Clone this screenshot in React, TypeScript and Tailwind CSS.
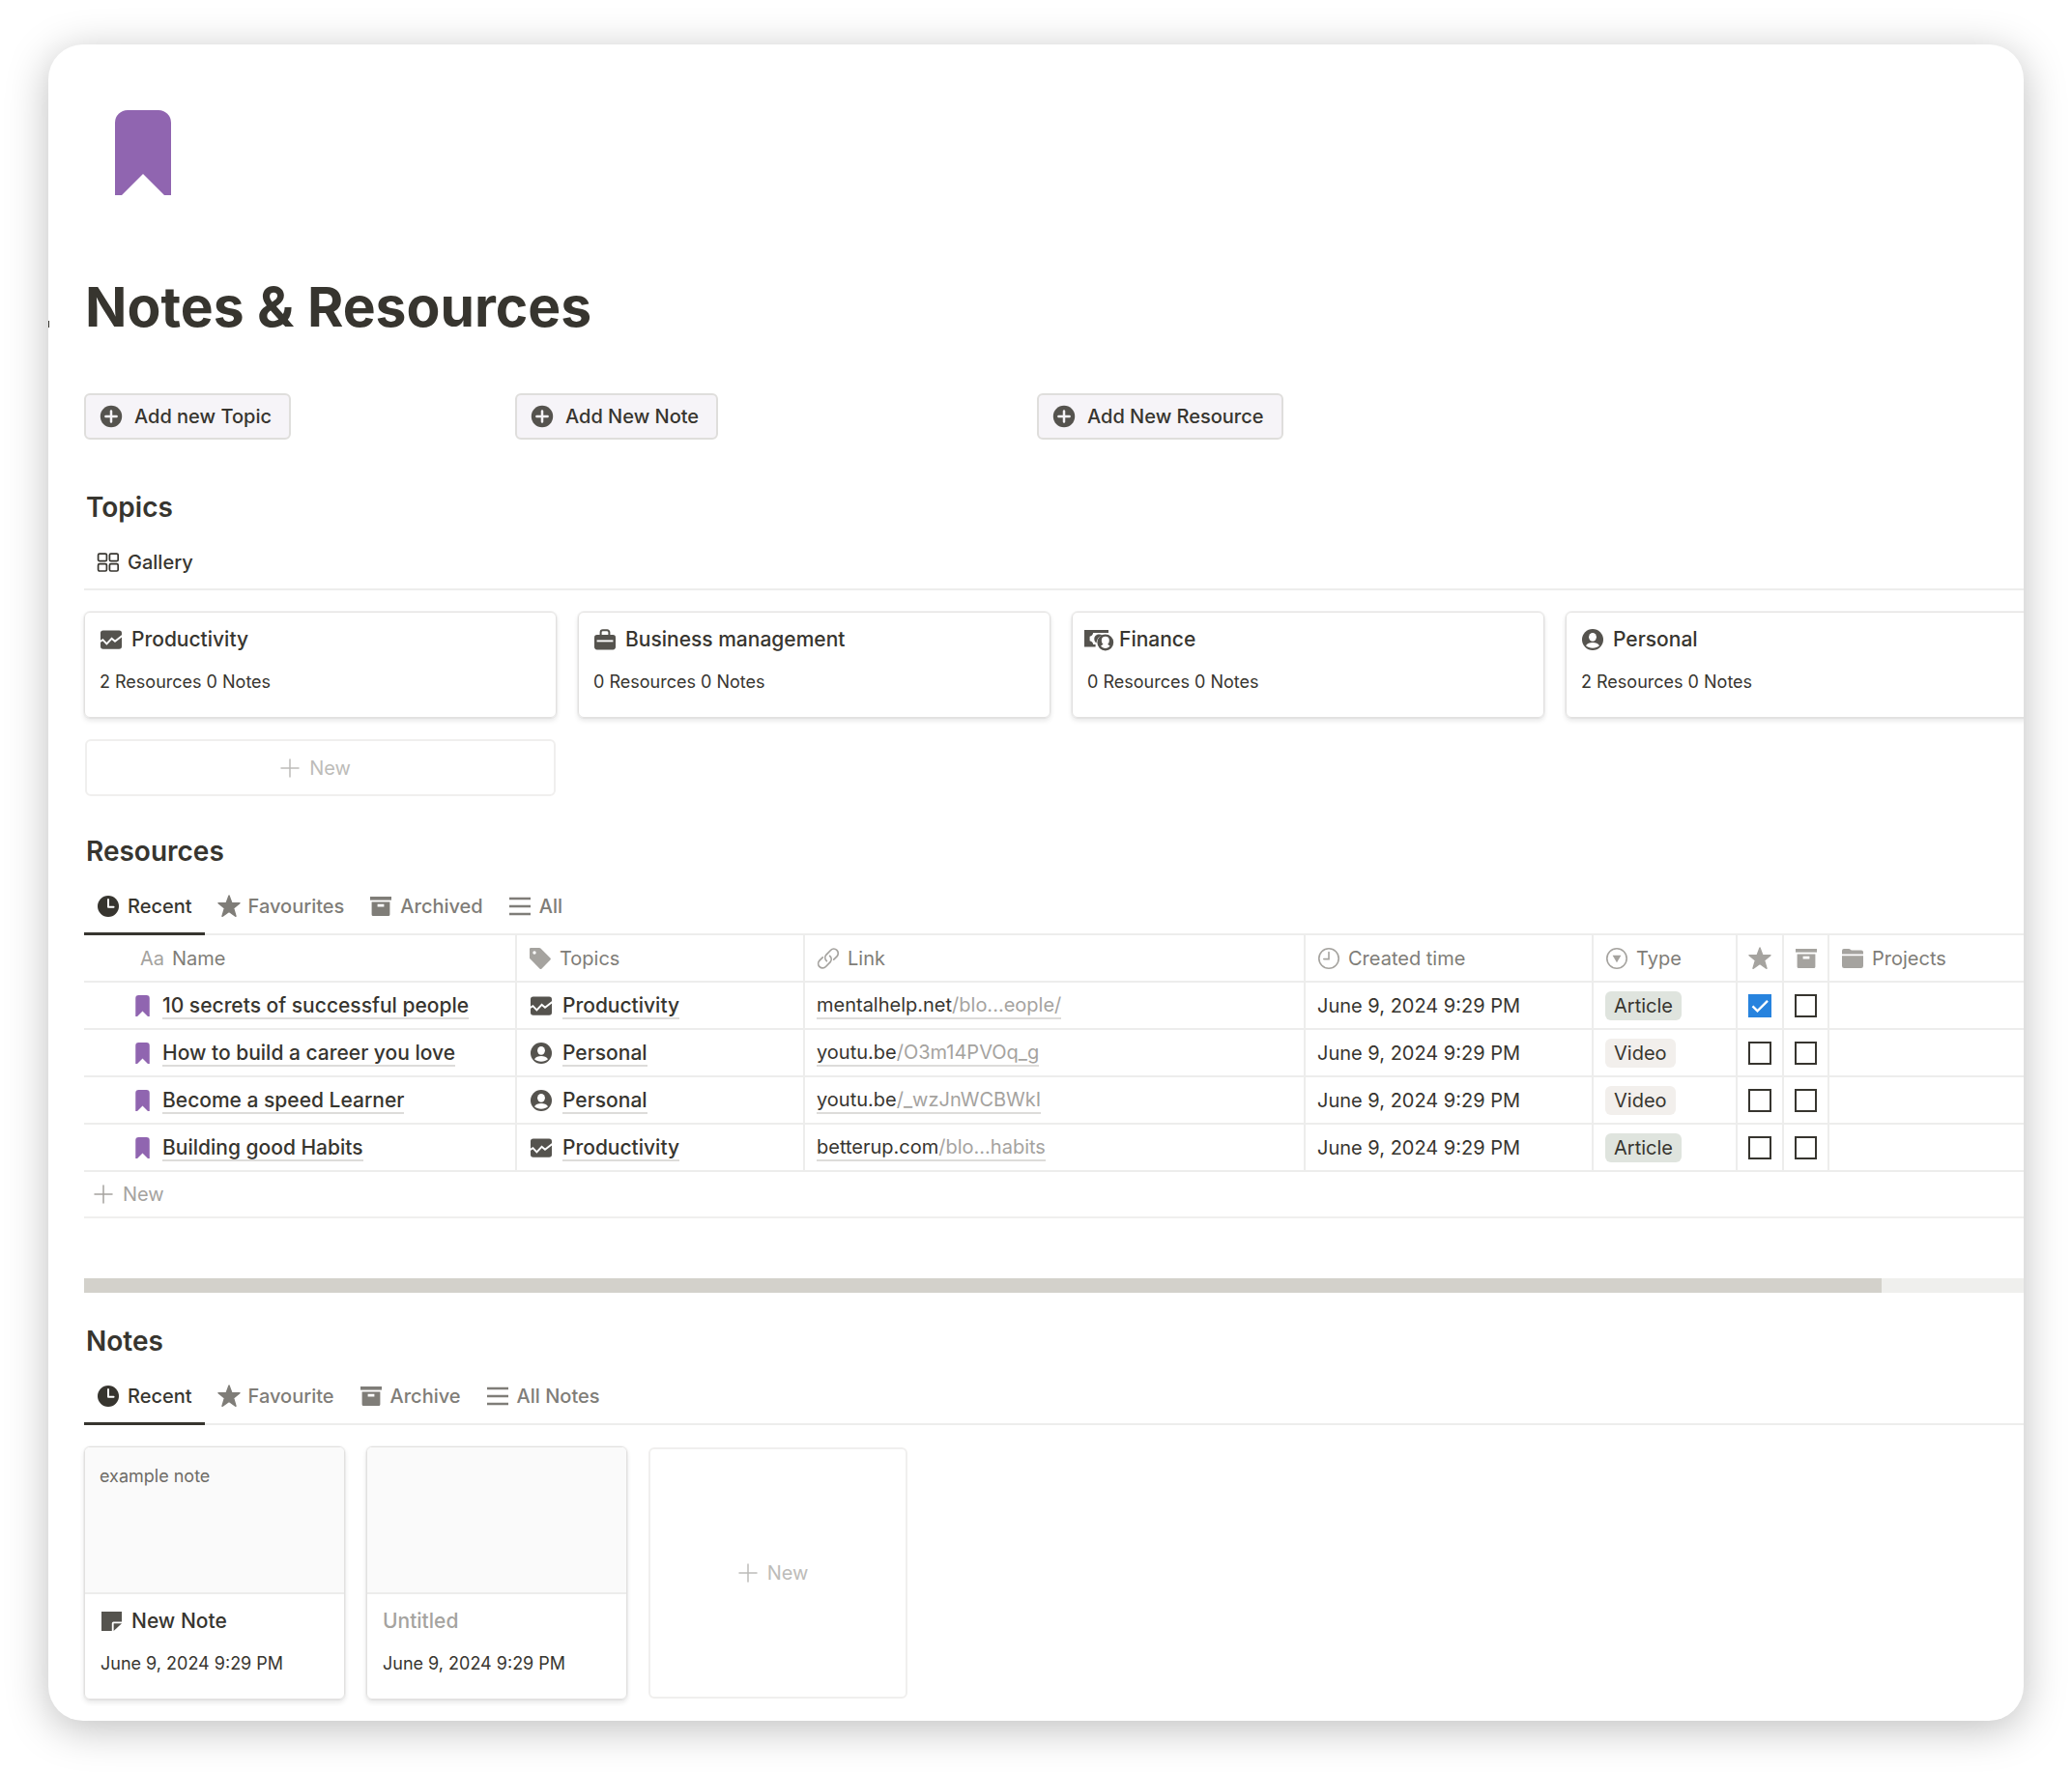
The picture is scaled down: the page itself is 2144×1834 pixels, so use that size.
import type { ReactNode } from 'react';

// ─── Icons ────────────────────────────────────────────────────────────────────
// All drawn on a 24 grid, coloured through currentColor.

type IconProps = { className?: string };

function Svg({ className = 'size-6', children }: IconProps & { children: ReactNode }) {
  return (
    <svg viewBox="0 0 24 24" fill="currentColor" className={`shrink-0 ${className}`} aria-hidden="true">
      {children}
    </svg>
  );
}

function PlusCircle({ className }: IconProps) {
  return (
    <Svg className={className}>
      <circle cx="12" cy="12" r="11.2" />
      <path d="M12 6.4v11.2M6.4 12h11.2" stroke="#f6f4f8" strokeWidth="2.5" strokeLinecap="round" />
    </Svg>
  );
}

function Plus({ className }: IconProps) {
  return (
    <Svg className={className}>
      <path d="M12 3v18M3 12h18" stroke="currentColor" strokeWidth="1.5" strokeLinecap="round" />
    </Svg>
  );
}

function GalleryIcon({ className }: IconProps) {
  return (
    <Svg className={className}>
      <g fill="none" stroke="currentColor" strokeWidth="1.7">
        <rect x="1.6" y="3.2" width="8.8" height="7.4" rx="1.4" />
        <rect x="13.4" y="3.2" width="8.8" height="7.4" rx="1.4" />
        <rect x="1.6" y="13.6" width="8.8" height="7.4" rx="1.4" />
        <rect x="13.4" y="13.6" width="8.8" height="7.4" rx="1.4" />
      </g>
    </Svg>
  );
}

function ChartIcon({ className }: IconProps) {
  return (
    <Svg className={className}>
      <rect x="1" y="2.4" width="22" height="19.4" rx="2.8" />
      <path d="M.6 14l2.8-1.8 4 4.2 5.2-5.6 3.4 3L23.400 8" fill="none" stroke="#fff" strokeWidth="1.9" />
    </Svg>
  );
}

function BriefcaseIcon({ className }: IconProps) {
  return (
    <Svg className={className}>
      <path d="M7.600 7.600V4.500A2.200 2.200 0 0 1 9.800 2.300h4.400a2.200 2.200 0 0 1 2.200 2.200v3.100" fill="none" stroke="currentColor" strokeWidth="2" />
      <rect x="1" y="7" width="22" height="15.400" rx="2.8" />
      <path d="M3.600 13.400h16.800" stroke="#fff" strokeWidth="1.9" />
    </Svg>
  );
}

// Banknote with a coin in front; wider than the other icons
function FinanceIcon({ className }: IconProps) {
  return (
    <svg viewBox="0 0 32 24" fill="currentColor" className={`shrink-0 ${className ?? ''}`} aria-hidden="true">
      <path d="M1 2h25v3H10.200c-.3 2-1.600 3.300-3.600 3.700v4.600c2 .4 3.300 1.700 3.600 3.700H12.600V19.600H1z" />
      <path d="M19.500 7.200c-4-1.800-8.200.2-8.200 4 0 2 .9 3.400 2.200 4.300.2-3.600 2.400-6.900 6-8.300z" />
      <circle cx="22.800" cy="15" r="8.400" />
      <ellipse cx="22.800" cy="13" rx="4" ry="4.200" fill="#fff" />
      <path d="M18 18.600c1.200-1 2.600-1.400 3-2.600h3.600c.4 1.200 1.800 1.600 3 2.600-1.200 1.500-2.800 2.300-4.800 2.300s-3.600-.8-4.800-2.300z" fill="#fff" />
    </svg>
  );
}

function PersonIcon({ className }: IconProps) {
  return (
    <Svg className={className}>
      <circle cx="12" cy="12" r="11" />
      <ellipse cx="12" cy="9.300" rx="3.900" ry="4.400" fill="#fff" />
      <path d="M5 18.200c1.200-2.300 4-3.200 7-3.200s5.800.9 7 3.200c-1.600 1.600-4.200 2.500-7 2.500s-5.400-.9-7-2.500z" fill="#fff" />
    </Svg>
  );
}

function BookmarkIcon({ className }: IconProps) {
  return (
    <svg viewBox="0 0 58 88" fill="#9065b0" className={`shrink-0 ${className ?? ''}`} aria-hidden="true">
      <path d="M0 13A13 13 0 0 1 13 0h32a13 13 0 0 1 13 13v75h-7L29 66 7 88H0z" />
    </svg>
  );
}

function ClockSolid({ className }: IconProps) {
  return (
    <Svg className={className}>
      <circle cx="12" cy="12" r="11" />
      <path d="M12 5v7.800h5.600" fill="none" stroke="#fff" strokeWidth="1.900" strokeLinecap="round" strokeLinejoin="round" />
    </Svg>
  );
}

function ClockOutline({ className }: IconProps) {
  return (
    <Svg className={className}>
      <circle cx="12" cy="12" r="10.200" fill="none" stroke="currentColor" strokeWidth="1.600" />
      <path d="M12 5.600V12.600H6.800" fill="none" stroke="currentColor" strokeWidth="1.600" strokeLinecap="round" />
    </Svg>
  );
}

function StarIcon({ className }: IconProps) {
  return (
    <Svg className={className}>
      <path
        d="M12 1l2.900 7.800h8.100l-6.400 5.100 2.400 8.400L12 17.500l-7 4.800 2.400-8.400L1 8.800h8.100z"
        stroke="currentColor"
        strokeWidth="1.400"
        strokeLinejoin="round"
      />
    </Svg>
  );
}

function ArchiveIcon({ className }: IconProps) {
  return (
    <Svg className={className}>
      <path d="M1 2h22v3.600H1z" />
      <path fillRule="evenodd" d="M2.600 7.400h18.800v13a1.500 1.500 0 0 1-1.500 1.500H4.100a1.500 1.500 0 0 1-1.500-1.500zM8.600 9.800v2.600h6.800V9.800z" />
    </Svg>
  );
}

function ListIcon({ className }: IconProps) {
  return (
    <Svg className={className}>
      <path d="M1 4h22M1 12h22M1 20h22" stroke="currentColor" strokeWidth="2.400" />
    </Svg>
  );
}

function TagIcon({ className }: IconProps) {
  return (
    <Svg className={className}>
      <path fillRule="evenodd" d="M1 2.200A1.200 1.200 0 0 1 2.200 1H11a2 2 0 0 1 1.400.6l10 9.800a1.600 1.600 0 0 1 0 2.200l-8.800 8.800a1.600 1.600 0 0 1-2.200 0L1.600 12.600A2 2 0 0 1 1 11.200zM6 4.300a1.700 1.700 0 1 0 0 3.400 1.700 1.700 0 0 0 0-3.400z" />
    </Svg>
  );
}

function LinkIcon({ className }: IconProps) {
  return (
    <Svg className={className}>
      <g fill="none" stroke="currentColor" strokeWidth="1.700" strokeLinecap="round">
        <path d="M10.400 14.600a4.600 4.600 0 0 1-.6-6.300l4.700-4.800a4.500 4.500 0 0 1 6.500 6.300l-3.300 3.400" />
        <path d="M13.600 9.400a4.600 4.600 0 0 1 .6 6.300l-4.700 4.800A4.500 4.500 0 0 1 3 14.200l3.300-3.400" />
      </g>
    </Svg>
  );
}

function SelectIcon({ className }: IconProps) {
  return (
    <Svg className={className}>
      <circle cx="12" cy="12" r="10.200" fill="none" stroke="currentColor" strokeWidth="1.600" />
      <path d="M7.600 8.800h8.800L12 16.200z" />
    </Svg>
  );
}

function FolderIcon({ className }: IconProps) {
  return (
    <Svg className={className}>
      <path d="M1 7.400V4a2 2 0 0 1 2-2h5.200a2 2 0 0 1 1.200.4l1.400 1.200H21a2 2 0 0 1 2 2v1.800z" />
      <path d="M1 9.200h22v10.600a2.200 2.200 0 0 1-2.200 2.200H3.200A2.200 2.200 0 0 1 1 19.800z" />
    </Svg>
  );
}

function NoteIcon({ className }: IconProps) {
  return (
    <Svg className={className}>
      <path d="M1 2h21v10.400h-8.600a1.600 1.600 0 0 0-1.600 1.600v8H1z" />
      <path d="M13.600 14.200H22L13.600 22z" />
    </Svg>
  );
}

// ─── Data ─────────────────────────────────────────────────────────────────────

const topics = [
  { name: 'Productivity', icon: <ChartIcon />, summary: '2 Resources 0 Notes' },
  { name: 'Business management', icon: <BriefcaseIcon />, summary: '0 Resources 0 Notes' },
  { name: 'Finance', icon: <FinanceIcon className="h-6 w-8" />, summary: '0 Resources 0 Notes' },
  { name: 'Personal', icon: <PersonIcon />, summary: '2 Resources 0 Notes' },
];

const resources = [
  { name: '10 secrets of successful people', topic: 'Productivity', host: 'mentalhelp.net', path: '/blo...eople/', type: 'Article', starred: true },
  { name: 'How to build a career you love', topic: 'Personal', host: 'youtu.be', path: '/O3m14PVOq_g', type: 'Video', starred: false },
  { name: 'Become a speed Learner', topic: 'Personal', host: 'youtu.be', path: '/_wzJnWCBWkI', type: 'Video', starred: false },
  { name: 'Building good Habits', topic: 'Productivity', host: 'betterup.com', path: '/blo...habits', type: 'Article', starred: false },
];

const created = 'June 9, 2024 9:29 PM';

const resourceTabs = [
  { label: 'Recent', icon: <ClockSolid /> },
  { label: 'Favourites', icon: <StarIcon /> },
  { label: 'Archived', icon: <ArchiveIcon /> },
  { label: 'All', icon: <ListIcon /> },
];

const noteTabs = [
  { label: 'Recent', icon: <ClockSolid /> },
  { label: 'Favourite', icon: <StarIcon /> },
  { label: 'Archive', icon: <ArchiveIcon /> },
  { label: 'All Notes', icon: <ListIcon /> },
];

const cardStyle =
  'rounded-md border border-[#e2e1e0] shadow-[0_0_0_1px_rgba(15,15,15,0.03),0_3px_5px_rgba(15,15,15,0.1)]';

// ─── Pieces ───────────────────────────────────────────────────────────────────

function AddButton({ label }: { label: string }) {
  return (
    <button
      type="button"
      className="flex h-12 items-center gap-3 justify-self-start rounded-md border-2 border-[#dfdedc] bg-[#f6f4f8] pr-[18px] pl-[14px] font-medium"
    >
      <PlusCircle className="size-6 text-[#55534e]" />
      {label}
    </button>
  );
}

function Heading({ children }: { children: ReactNode }) {
  return <h2 className="pl-[2px] text-[28px] leading-9 font-semibold">{children}</h2>;
}

function Tabs({ items }: { items: { label: string; icon: ReactNode }[] }) {
  return (
    <div role="tablist" className="mt-4 flex h-[53px] border-b-2 border-[#ededec]">
      {items.map((tab, i) => (
        <button
          key={tab.label}
          type="button"
          role="tab"
          aria-selected={i === 0}
          className={`-mb-[2px] flex items-center gap-2 border-b-3 px-[13px] ${
            i === 0 ? 'border-[#37352f]' : 'border-transparent text-[#7f7d78]'
          } pb-1 font-medium`}
        >
          {tab.icon}
          {tab.label}
        </button>
      ))}
    </div>
  );
}

function HeaderCell({ icon, label }: { icon: ReactNode; label: string }) {
  return (
    <div className="flex items-center gap-2">
      <span className="text-[#a5a39f]">{icon}</span>
      {label}
    </div>
  );
}

function Check({ label, checked }: { label: string; checked: boolean }) {
  return (
    <span className="relative flex justify-center">
      <input
        type="checkbox"
        aria-label={label}
        defaultChecked={checked}
        className="peer size-6 appearance-none border-2 border-[#37352f] checked:border-[#2783de] checked:bg-[#2783de]"
      />
      <svg
        viewBox="0 0 24 24"
        className="pointer-events-none absolute hidden size-6 peer-checked:block"
        fill="none"
        stroke="#fff"
        strokeWidth="2.400"
        aria-hidden="true"
      >
        <path d="M4.500 12.400l5 5L20 6.800" />
      </svg>
    </span>
  );
}

function ResourceTable() {
  const cell = 'h-[49px] border-b-2 border-[#ededec] px-3 text-left font-normal';
  const ruled = `${cell} border-l-2`;
  const link = 'border-b-2 border-[#dddcda] pt-[2px] leading-[25px]';
  return (
    <table className="w-full table-fixed border-separate border-spacing-0 whitespace-nowrap">
      <colgroup>
        <col className="w-[446px]" />
        <col className="w-[298px]" />
        <col className="w-[518px]" />
        <col className="w-[298px]" />
        <col className="w-[149px]" />
        <col className="w-[48px]" />
        <col className="w-[47px]" />
        <col />
      </colgroup>
      <thead className="text-[#7f7d78]">
        <tr>
          <th scope="col" className={cell}>
            <span className="pl-[46px] text-[#a5a39f]">Aa</span>
            <span className="pl-2">Name</span>
          </th>
          <th scope="col" className={ruled}><HeaderCell icon={<TagIcon />} label="Topics" /></th>
          <th scope="col" className={ruled}><HeaderCell icon={<LinkIcon />} label="Link" /></th>
          <th scope="col" className={ruled}><HeaderCell icon={<ClockOutline />} label="Created time" /></th>
          <th scope="col" className={ruled}><HeaderCell icon={<SelectIcon />} label="Type" /></th>
          <th scope="col" aria-label="Favourite" className={`${ruled} px-[11px] text-[#a5a39f]`}><StarIcon /></th>
          <th scope="col" aria-label="Archive" className={`${ruled} px-[11px] text-[#a5a39f]`}><ArchiveIcon /></th>
          <th scope="col" className={ruled}><HeaderCell icon={<FolderIcon />} label="Projects" /></th>
        </tr>
      </thead>
      <tbody>
        {resources.map((r) => (
          <tr key={r.name}>
            <td className={cell}>
              <div className="flex items-center gap-[13px] pl-[41px] text-[21px] font-medium">
                <BookmarkIcon className="h-[22px] w-[15px]" />
                <a href="#resource" className={link}>{r.name}</a>
              </div>
            </td>
            <td className={ruled}>
              <div className="flex items-center gap-[10px] pl-px text-[21px] font-medium">
                <span className="text-[#55534e]">{r.topic === 'Personal' ? <PersonIcon /> : <ChartIcon />}</span>
                <a href="#topic" className={link}>{r.topic}</a>
              </div>
            </td>
            <td className={ruled}>
              <a href="#link" className={`${link} inline-block`}>
                {r.host}
                <span className="text-[#a5a39f]">{r.path}</span>
              </a>
            </td>
            <td className={ruled}>{created}</td>
            <td className={ruled}>
              <span
                className={`inline-block rounded-md px-[9px] leading-[30px] ${
                  r.type === 'Article' ? 'bg-[#dfe4de]' : 'bg-[#f2efec]'
                }`}
              >
                {r.type}
              </span>
            </td>
            <td className={`${ruled} px-[11px]`}><Check label={`Favourite ${r.name}`} checked={r.starred} /></td>
            <td className={`${ruled} px-[11px]`}><Check label={`Archive ${r.name}`} checked={false} /></td>
            <td className={ruled} />
          </tr>
        ))}
      </tbody>
    </table>
  );
}

function NoteCard({ preview, title, icon }: { preview?: string; title?: string; icon?: ReactNode }) {
  return (
    <article className={`flex w-[270px] flex-col overflow-hidden ${cardStyle}`}>
      <div className="h-[152px] border-b-2 border-[#ededec] bg-[#fafafa] px-[15px] pt-4 text-[18px] leading-7 text-[#6e6c67]">
        {preview}
      </div>
      <div className="px-4 pt-3 pb-[22px]">
        <h3 className={`flex items-center gap-2 text-[21px] leading-8 font-medium ${title ? '' : 'text-[#a5a39f]'}`}>
          {icon}
          {title ?? 'Untitled'}
        </h3>
        <p className="mt-[14px] text-[18px] leading-7">{created}</p>
      </div>
    </article>
  );
}

export default function App() {
  return (
    <div className="bg-white px-[50px] pt-[46px] pb-[54px] font-[Inter,'Liberation_Sans',sans-serif] text-[20px] leading-6 text-[#37352f]">
      <main className="relative overflow-hidden rounded-[36px] bg-white pt-[68px] pb-[22px] pl-[37px] shadow-[0_8px_44px_rgba(0,0,0,0.26)]">
        {/* sliver of the neighbouring column */}
        <span className="absolute top-[286px] left-0 h-[7px] w-px bg-[#37352f]" />

        <BookmarkIcon className="ml-8 h-[88px] w-[58px]" />
        <h1 className="mt-[80px] pl-px text-[57px] leading-[72px] font-bold">Notes &amp; Resources</h1>

        <div className="mt-[53px] grid grid-cols-[446fr_540fr_1021fr]">
          <AddButton label="Add new Topic" />
          <AddButton label="Add New Note" />
          <AddButton label="Add New Resource" />
        </div>

        <section className="mt-[52px]">
          <Heading>Topics</Heading>
          <div role="tablist" className="mt-4 flex h-[52px] border-b-2 border-[#ededec]">
            <button type="button" role="tab" aria-selected="true" className="flex items-center gap-2 px-[13px] pb-1 font-medium">
              <GalleryIcon />
              Gallery
            </button>
          </div>
          <div className="mt-[22px] flex gap-[22px]">
            {topics.map((t) => (
              <article key={t.name} className={`h-[110px] w-[489px] shrink-0 px-[15px] pt-3 ${cardStyle}`}>
                <h3 className="flex items-center gap-[9px] text-[21px] leading-8 font-medium">
                  <span className="flex w-6 justify-center text-[#55534e]">{t.icon}</span>
                  {t.name}
                </h3>
                <p className="mt-[14px] text-[18px] leading-7">{t.summary}</p>
              </article>
            ))}
          </div>
          <button
            type="button"
            className="mt-[22px] ml-px flex h-[59px] w-[487px] items-center justify-center gap-2 rounded-md border-2 border-[#f0efee] pr-3 text-[#bdbcb9]"
          >
            <Plus />
            New
          </button>
        </section>

        <section className="mt-[39px]">
          <Heading>Resources</Heading>
          <Tabs items={resourceTabs} />
          <ResourceTable />
          <button type="button" className="flex h-12 w-full items-center gap-2 border-b-2 border-[#f0efee] px-2 text-[#a5a39f]">
            <Plus />
            New
          </button>
          <div className="mt-[62px] h-[15px] bg-[#efefed]">
            <div className="h-full w-[92.7%] bg-[#d3d1cb]" />
          </div>
        </section>

        <section className="mt-[32px]">
          <Heading>Notes</Heading>
          <Tabs items={noteTabs} />
          <div className="mt-[22px] flex gap-[22px]">
            <NoteCard preview="example note" title="New Note" icon={<NoteIcon className="size-6 text-[#55534e]" />} />
            <NoteCard />
            <button
              type="button"
              className="my-px flex w-[268px] items-center justify-center gap-2 rounded-md border-2 border-[#f0efee] pr-3 text-[#bdbcb9]"
            >
              <Plus />
              New
            </button>
          </div>
        </section>
      </main>
    </div>
  );
}
